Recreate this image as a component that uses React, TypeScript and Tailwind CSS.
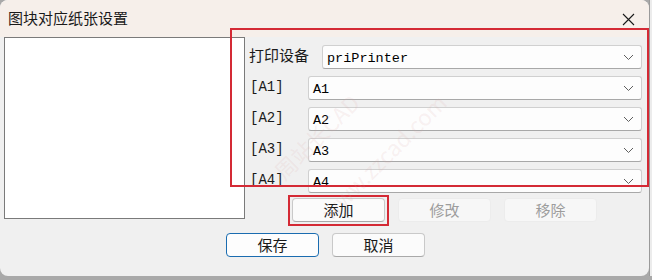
import React from 'react'

const cjk = { fontFamily: '"Noto Sans CJK SC", "Noto Sans", sans-serif' }
const mono = { fontFamily: '"Liberation Mono", "Noto Sans CJK SC", monospace' }

function Chevron() {
  return (
    <svg width="11" height="7" viewBox="0 0 11 7" className="text-[#5f5f5f]">
      <polyline points="1,1 5.5,5.5 10,1" fill="none" stroke="currentColor" strokeWidth="1" />
    </svg>
  )
}

function Select({ value, className }: { value: string; className: string }) {
  return (
    <div
      className={`h-[24px] flex items-center justify-between bg-[#fdfdfd] border border-[#d0d0d0] border-b-[#a8a8a8] rounded-[3px] pl-[4px] pr-[7px] ${className}`}
    >
      <span className="text-[13.5px] text-black leading-none pt-[3px]" style={mono}>
        {value}
      </span>
      <Chevron />
    </div>
  )
}

function Btn({
  label,
  disabled,
  primary,
}: {
  label: string
  disabled?: boolean
  primary?: boolean
}) {
  let cls = 'bg-[#fbfbfb] border-[#c9c9c9] border-b-[#a9a9a9] text-[#1a1a1a]'
  if (disabled) cls = 'bg-[#f7f7f7] border-[#ececec] text-[#9d9d9d]'
  if (primary) cls = 'bg-[#fdfdfd] border-[#1a6cb0] text-[#1a1a1a]'
  return (
    <div
      className={`w-[93px] h-[24px] flex items-center justify-center border rounded-[4px] text-[15px] ${cls}`}
      style={cjk}
    >
      {label}
    </div>
  )
}

export default function App() {
  const rows = ['A1', 'A2', 'A3', 'A4']
  return (
    <div className="w-[652px] h-[280px] bg-[#a9a9a9] flex relative overflow-hidden">
      <div className="w-[649px] h-[276px] bg-[#f0f0f0] rounded-lg overflow-hidden flex flex-col shrink-0">
        {/* title bar */}
        <div className="h-[37px] bg-[#f6efea] flex items-center justify-between pl-[8px] pr-[14px] shrink-0">
          <span className="text-[15px] text-[#1a1a1a] pb-[1px]" style={cjk}>
            图块对应纸张设置
          </span>
          <svg width="13" height="13" viewBox="0 0 13 13" className="text-[#1a1a1a] mt-[1px]">
            <path d="M1 1 L12 12 M12 1 L1 12" stroke="currentColor" strokeWidth="1.1" />
          </svg>
        </div>

        {/* body */}
        <div className="flex">
          <div className="ml-[4px] w-[241px] h-[182px] bg-white border border-[#7a7a7a] shrink-0" />
          <div className="flex flex-col pt-[8px] w-[397px]">
            <div className="flex items-center h-[24px]">
              <span className="pl-[4px] w-[77px] text-[15px] text-[#1a1a1a] pb-[4px]" style={cjk}>
                打印设备
              </span>
              <Select value="priPrinter" className="w-[320px]" />
            </div>
            {rows.map((r) => (
              <div key={r} className="flex items-center h-[24px] mt-[7px]">
                <span className="pl-[5px] w-[63px] text-[14px] text-[#1a1a1a] pb-[2px]" style={mono}>
                  [{r}]
                </span>
                <Select value={r} className="w-[334px]" />
              </div>
            ))}
            <div className="flex mt-[5px] pl-[47px]">
              <Btn label="添加" />
              <div className="ml-[13px]">
                <Btn label="修改" disabled />
              </div>
              <div className="ml-[13px]">
                <Btn label="移除" disabled />
              </div>
            </div>
          </div>
        </div>

        <div className="flex pl-[226px] mt-[11px]">
          <Btn label="保存" primary />
          <div className="ml-[13px]">
            <Btn label="取消" />
          </div>
        </div>
      </div>
      <div className="flex-1 h-[276px] bg-[#ececec] border-l border-[#9a9a9a]" />

      {/* annotation boxes */}
      <div className="absolute left-[230px] top-[28px] w-[419px] h-[159px] border-2 border-[#d42a35] pointer-events-none" />
      <div className="absolute left-[288px] top-[195px] w-[101px] h-[31px] border-2 border-[#d42a35] pointer-events-none" />

      {/* watermark */}
      <div
        className="absolute left-[262px] top-[120px] -rotate-45 text-[22px] text-[#d9a0a0]/15 pointer-events-none whitespace-nowrap"
        style={cjk}
      >
        周站长CAD
      </div>
      <div
        className="absolute left-[300px] top-[140px] -rotate-45 text-[22px] text-[#d9a0a0]/15 pointer-events-none whitespace-nowrap"
        style={cjk}
      >
        www.zzcad.com
      </div>
    </div>
  )
}
